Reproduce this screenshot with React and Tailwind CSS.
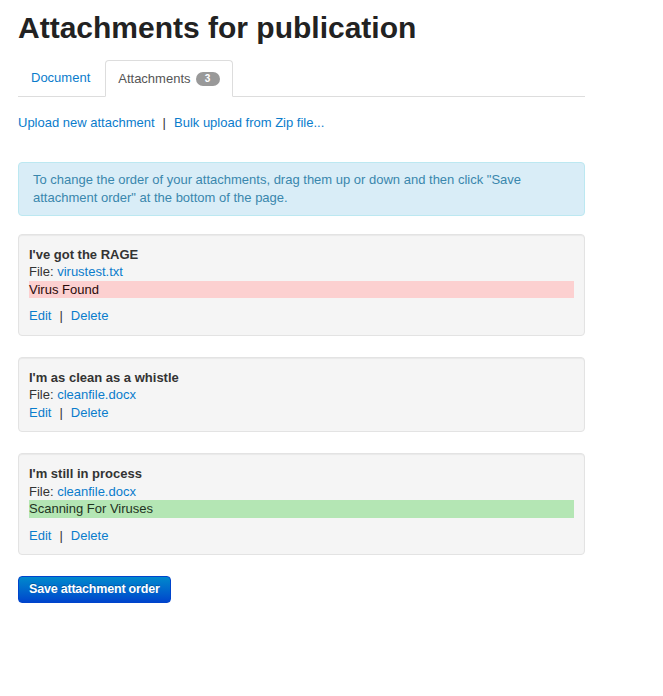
import React from 'react';

const attachments = [
  { title: "I've got the RAGE", file: 'virustest.txt', status: 'Virus Found', tone: 'bad' },
  { title: "I'm as clean as a whistle", file: 'cleanfile.docx' },
  { title: "I'm still in process", file: 'cleanfile.docx', status: 'Scanning For Viruses', tone: 'scan' },
];

const AttachmentCard = ({ item }) => (
  <div className="border border-[#e3e3e3] bg-[#f5f5f5] rounded-[4px] px-[10px] pt-[11px] pb-[10px] shadow-[inset_0_1px_1px_rgba(0,0,0,0.05)]">
    <div className="font-bold">{item.title}</div>
    <div>
      File: <a href="#" className="text-[#0a7ccc]">{item.file}</a>
    </div>
    {item.status && (
      <div className={`mb-[9px] ${item.tone === 'bad' ? 'bg-[#fcd0d0] text-[#2a0a0a]' : 'bg-[#b4e6b4] text-[#1e331e]'}`}>
        {item.status}
      </div>
    )}
    <div>
      <a href="#" className="text-[#0a7ccc]">Edit</a>
      <span className="mx-[8px] text-[#333]">|</span>
      <a href="#" className="text-[#0a7ccc]">Delete</a>
    </div>
  </div>
);

export default function App() {
  return (
    <div className="min-h-screen bg-white font-['Liberation_Sans',Arial,sans-serif] text-[13px] leading-[17.5px] text-[#333]">
      <div className="ml-[18px] w-[567px] pt-[10px]">
        <h1 className="text-[30px] leading-[36px] font-bold text-[#222]">Attachments for publication</h1>

        {/* tabs */}
        <div className="mt-[14px] flex border-b border-[#ddd]">
          <a href="#" className="mr-[2px] px-[12px] py-[7px] leading-[20px] border border-transparent text-[#0a7ccc]">Document</a>
          <div className="-mb-px px-[12px] py-[7px] leading-[20px] bg-white border border-[#ddd] border-b-white rounded-t-[4px] flex items-center text-[#555]">
            Attachments
            <span className="ml-[5px] inline-flex items-center justify-center w-[24px] h-[14px] rounded-full bg-[#999] text-white text-[10px] font-bold leading-none">3</span>
          </div>
        </div>

        <div className="mt-[17px]">
          <a href="#" className="text-[#0a7ccc]">Upload new attachment</a>
          <span className="mx-[8px]">|</span>
          <a href="#" className="text-[#0a7ccc]">Bulk upload from Zip file...</a>
        </div>

        <div className="mt-[30px] bg-[#d9edf7] border border-[#bce8f1] rounded-[4px] py-[8px] pl-[14px] pr-[30px] leading-[18px] text-[#3a87ad]">
          To change the order of your attachments, drag them up or down and then click "Save attachment order" at the bottom of the page.
        </div>

        <div className="mt-[18px] flex flex-col gap-[21px]">
          {attachments.map((a, i) => (
            <AttachmentCard key={i} item={a} />
          ))}
        </div>

        <button className="mt-[21px] h-[27px] px-[10px] rounded-[4px] border border-[#0044cc] bg-gradient-to-b from-[#0088cc] to-[#0044cc] text-white font-bold text-[12.5px] tracking-[-0.2px] [text-shadow:0_-1px_0_rgba(0,0,0,0.25)]">
          Save attachment order
        </button>
      </div>
    </div>
  );
}
